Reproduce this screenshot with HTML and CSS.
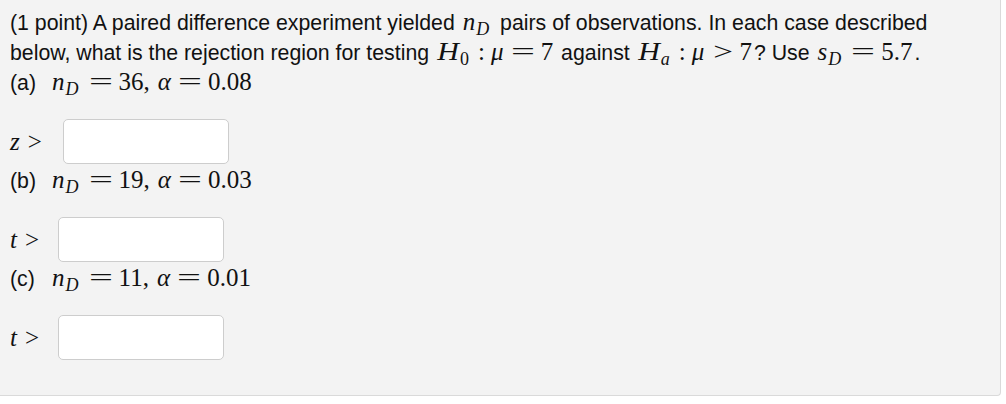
FILE: index.html
```html
<!DOCTYPE html>
<html>
<head>
<meta charset="utf-8">
<link rel="stylesheet" href="styles.css">
</head>
<body>
<div class="problem">
  <div class="intro">(1 point) A paired difference experiment yielded <span class="m mi"><i>n</i><sub><i>D</i></sub></span> pairs of observations. In each case described below, what is the rejection region for testing <span class="m mi"><i class="H">H</i><sub>0</sub><span class="col">:</span><i>μ</i><span class="eq">=</span>7</span> against <span class="m mi"><i class="H">H</i><sub><i>a</i></sub><span class="col">:</span><i>μ</i><span class="gt">&gt;</span>7</span>? Use <span class="m mi"><i>s</i><sub><i>D</i></sub><span class="eq">=</span>5.7</span>.</div>
  <div class="part"><span class="tag">(a)</span><span class="m"><i>n</i><sub><i>D</i></sub><span class="eq">=</span>36,<span class="sp"></span><i>α</i><span class="eq">=</span>0.08</span></div>
  <div class="answer"><span class="lbl lz"><i>z</i><span class="lgt">&gt;</span></span><span class="box"></span></div>
  <div class="part"><span class="tag">(b)</span><span class="m"><i>n</i><sub><i>D</i></sub><span class="eq">=</span>19,<span class="sp"></span><i>α</i><span class="eq">=</span>0.03</span></div>
  <div class="answer"><span class="lbl"><i>t</i><span class="lgt">&gt;</span></span><span class="box"></span></div>
  <div class="part"><span class="tag">(c)</span><span class="m"><i>n</i><sub><i>D</i></sub><span class="eq">=</span>11,<span class="sp"></span><i>α</i><span class="eq">=</span>0.01</span></div>
  <div class="answer"><span class="lbl"><i>t</i><span class="lgt">&gt;</span></span><span class="box"></span></div>
</div>
</body>
</html>
```
FILE: styles.css
```css
html, body {
  margin: 0;
  padding: 0;
  background: #ffffff;
}
.problem {
  width: 1001px;
  height: 396px;
  box-sizing: border-box;
  background: #f3f3f3;
  border-right: 1px solid #dadada;
  border-bottom: 1px solid #dadada;
  border-bottom-right-radius: 4px;
  padding: 8px 10px 0 10px;
  font-family: "Liberation Sans", Arial, sans-serif;
  font-size: 21.3px;
  color: #111;
}
.intro {
  width: 960px;
  line-height: 30px;
}
.part {
  height: 30px;
  line-height: 30px;
}
.tag {
  display: inline-block;
  width: 42px;
}
.m {
  font-family: "Liberation Serif", "Times New Roman", serif;
  font-size: 25px;
  line-height: 1;
  white-space: nowrap;
}
.mi {
  margin: 0 2px;
}
.m i, .lbl i {
  font-style: italic;
}
.H {
  display: inline-block;
  transform: scaleX(1.2);
  margin: 0 2px 0 2px;
}
.m sub {
  font-size: 18px;
  vertical-align: -5px;
  line-height: 0;
  margin: 0 3px 0 1px;
}
.eq {
  display: inline-block;
  transform: scaleX(1.7);
  margin: 0 11px 0 12px;
}
.col {
  display: inline-block;
  margin: 0 6px 0 6px;
}
.gt {
  display: inline-block;
  transform: scaleX(1.4);
  margin: 0 9px 0 12px;
}
.sp {
  display: inline-block;
  width: 8px;
}
.answer {
  display: flex;
  align-items: center;
  margin: 21px 0 2px 0;
  height: 45px;
}
.lbl {
  font-family: "Liberation Serif", "Times New Roman", serif;
  font-size: 25px;
  width: 48px;
}
.lgt {
  margin-left: 8px;
}
.lz {
  width: 53px;
}
.box {
  box-sizing: border-box;
  width: 166px;
  height: 45px;
  background: #fff;
  border: 1px solid #cdcdcd;
  border-radius: 5px;
}
```
